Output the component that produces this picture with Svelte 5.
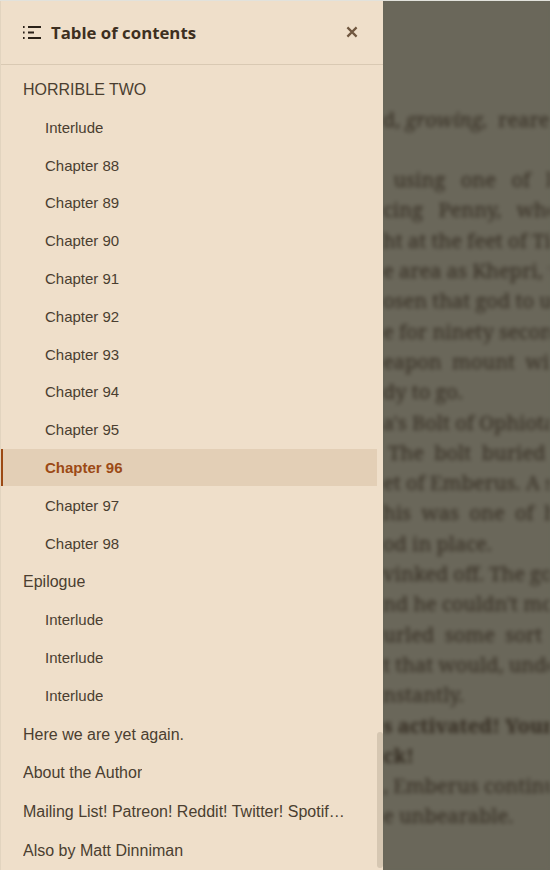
<script lang="ts">
  type Entry = { label: string; level: 0 | 1; active?: boolean };

  const entries: Entry[] = [
    { label: 'HORRIBLE TWO', level: 0 },
    { label: 'Interlude', level: 1 },
    { label: 'Chapter 88', level: 1 },
    { label: 'Chapter 89', level: 1 },
    { label: 'Chapter 90', level: 1 },
    { label: 'Chapter 91', level: 1 },
    { label: 'Chapter 92', level: 1 },
    { label: 'Chapter 93', level: 1 },
    { label: 'Chapter 94', level: 1 },
    { label: 'Chapter 95', level: 1 },
    { label: 'Chapter 96', level: 1, active: true },
    { label: 'Chapter 97', level: 1 },
    { label: 'Chapter 98', level: 1 },
    { label: 'Epilogue', level: 0 },
    { label: 'Interlude', level: 1 },
    { label: 'Interlude', level: 1 },
    { label: 'Interlude', level: 1 },
    { label: 'Here we are yet again.', level: 0 },
    { label: 'About the Author', level: 0 },
    { label: 'Mailing List! Patreon! Reddit! Twitter! Spotify! Discord!', level: 0 },
    { label: 'Also by Matt Dinniman', level: 0 }
  ];

  // the reading page behind the panel, only its right end shows
  const book = [
    'd, <i>growing,</i>  reared',
    '',
    '  using   one   of   his',
    'cing   Penny,   who',
    'ht at the feet of Tia',
    'e area as Khepri, th',
    'osen that god to us',
    'e for ninety second',
    'eapon  mount  with',
    'dy to go.',
    'a\'s Bolt of Ophiotau',
    ' The  bolt  buried',
    'et of Emberus. A sh',
    'his  was  one  of  his',
    'od in place.',
    'vinked off. The god',
    'nd he couldn\'t mov',
    'urled  some  sort  of',
    't that would, under',
    'nstantly.',
    '<b>s activated! Your</b>',
    '<b>ck!</b>',
    ', Emberus continue',
    'e unbearable.'
  ];
</script>

<div class="reader">
  <aside class="panel">
    <header class="head">
      <svg class="toc-icon" viewBox="0 0 18 13" width="18" height="13">
        <path d="M0 1h2M0 6.5h2M0 12h2" stroke="#2a2118" stroke-width="2" stroke-dasharray="1 .4" fill="none" />
        <path d="M5 1h13M5 6.5h6M5 12h13" stroke="#2a2118" stroke-width="2" fill="none" />
      </svg>
      <h2>Table of contents</h2>
      <button class="close" aria-label="Close">
        <svg viewBox="0 0 12 12" width="12" height="12">
          <path d="M1.4 1.4l9.2 9.2M10.6 1.4l-9.2 9.2" stroke="#70573f" stroke-width="2.2" fill="none" />
        </svg>
      </button>
    </header>

    <nav class="list">
      {#each entries as entry}
        <a href="#toc" class="item" class:sub={entry.level === 1} class:active={entry.active}>
          <span>{entry.label}</span>
        </a>
      {/each}
      <div class="thumb"></div>
    </nav>
  </aside>

  <div class="page" aria-hidden="true">
    {#each book as line}
      <p>{@html line}&nbsp;</p>
    {/each}
  </div>
</div>

<style>
  :global(body) {
    margin: 0;
    background: #6a675a;
  }

  .reader {
    display: flex;
    height: 870px;
    overflow: hidden;
    border-top: 1px solid #e2e2dc;
    box-sizing: border-box;
    font-family: "Liberation Sans", Arial, sans-serif;
  }

  .page {
    flex: 1;
    min-width: 0;
    padding-top: 103.6px;
    background: #6a675a;
    color: #352d22;
    font-family: "Noto Serif", "DejaVu Serif", "Liberation Serif", serif;
    font-size: 20px;
    line-height: 30.3px;
    white-space: pre;
    overflow: hidden;
    filter: blur(2px);
  }

  .page p {
    margin: 0;
  }

  .panel {
    position: relative;
    z-index: 1;
    width: 383px;
    flex-shrink: 0;
    display: flex;
    flex-direction: column;
    background: #efdfca;
    border-left: 1px solid #e2d4bf;
    box-sizing: border-box;
  }

  .head {
    display: flex;
    align-items: center;
    height: 62px;
    padding: 0 25px 1px 22px;
    border-bottom: 1px solid #d9c9b3;
    flex-shrink: 0;
  }

  .toc-icon {
    margin-right: 10px;
  }

  h2 {
    flex: 1;
    margin: 0;
    color: #3d2f20;
    font-family: "Open Sans", sans-serif;
    font-size: 16.8px;
    font-weight: 700;
  }

  .close {
    display: flex;
    padding: 0;
    border: none;
    background: none;
  }

  .list {
    position: relative;
    flex: 1;
    display: flex;
    flex-direction: column;
    padding-top: 4.6px;
    padding-right: 6px;
    overflow: hidden;
  }

  .item {
    display: flex;
    align-items: center;
    height: 38.8px;
    flex-shrink: 0;
    padding: 2px 29px 0 22px;
    box-sizing: border-box;
    color: #4a3e30;
    font-size: 16px;
    text-decoration: none;
  }

  .item span {
    overflow: hidden;
    white-space: nowrap;
    text-overflow: ellipsis;
  }

  .sub {
    height: 37.8px;
    padding-top: 0;
    padding-left: 44px;
    font-size: 15px;
  }

  .active {
    padding-left: 42px;
    border-left: 2px solid #9c4a15;
    background: #e3cfb6;
    color: #9c4a15;
    font-weight: 700;
  }

  .thumb {
    position: absolute;
    top: 667px;
    right: 0;
    width: 6px;
    height: 136px;
    border-radius: 3px;
    background: #d6c7b2;
  }
</style>
